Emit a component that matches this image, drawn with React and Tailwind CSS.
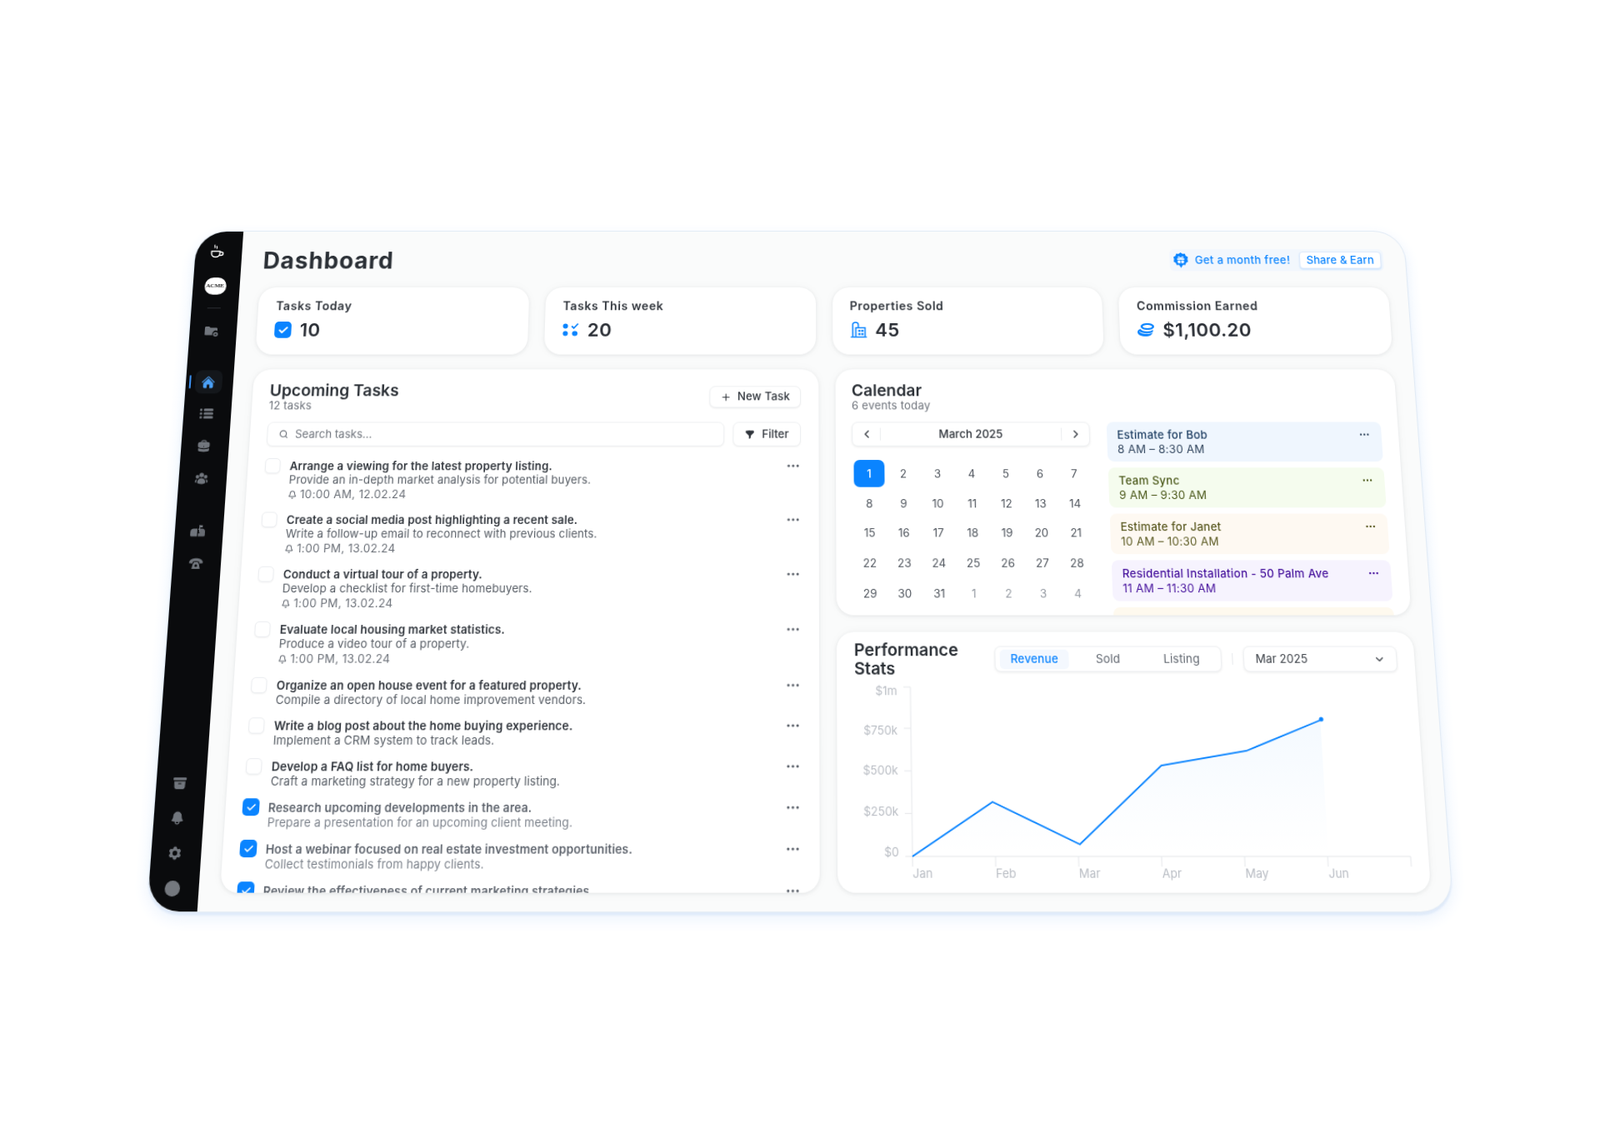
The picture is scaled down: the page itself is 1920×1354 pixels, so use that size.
import React from "react";
import { Plus, Search, ChevronLeft, ChevronRight, ChevronDown, Check, Ellipsis, Bell } from "lucide-react";
import { HiHome, HiBriefcase, HiUserGroup, HiArchiveBox, HiBell, HiCog6Tooth, HiFunnel } from "react-icons/hi2";

const tasks = [
  ["Arrange a viewing for the latest property listing.", "Provide an in-depth market analysis for potential buyers.", "10:00 AM, 12.02.24"],
  ["Create a social media post highlighting a recent sale.", "Write a follow-up email to reconnect with previous clients.", "1:00 PM, 13.02.24"],
  ["Conduct a virtual tour of a property.", "Develop a checklist for first-time homebuyers.", "1:00 PM, 13.02.24"],
  ["Evaluate local housing market statistics.", "Produce a video tour of a property.", "1:00 PM, 13.02.24"],
  ["Organize an open house event for a featured property.", "Compile a directory of local home improvement vendors."],
  ["Write a blog post about the home buying experience.", "Implement a CRM system to track leads."],
  ["Develop a FAQ list for home buyers.", "Craft a marketing strategy for a new property listing."],
  ["Research upcoming developments in the area.", "Prepare a presentation for an upcoming client meeting.", null, true],
  ["Host a webinar focused on real estate investment opportunities.", "Collect testimonials from happy clients.", null, true],
  ["Review the effectiveness of current marketing strategies.", null, null, true],
];

const events = [
  ["Estimate for Bob", "8 AM – 8:30 AM", "bg-[#eff6fe]", "text-[#1f3f63]", "text-[#33475f]"],
  ["Team Sync", "9 AM – 9:30 AM", "bg-[#f5fcee]", "text-[#4d5a1c]", "text-[#4d5a1c]"],
  ["Estimate for Janet", "10 AM – 10:30 AM", "bg-[#fef9f2]", "text-[#5b5a22]", "text-[#5b5a22]"],
  ["Residential Installation - 50 Palm Ave", "11 AM – 11:30 AM", "bg-[#f6f3fe]", "text-[#45119c]", "text-[#45119c]"],
  [null, null, "bg-[#fef9ee]", "", ""],
];

const days = [1,2,3,4,5,6,7,8,9,10,11,12,13,14,15,16,17,18,19,20,21,22,23,24,25,26,27,28,29,30,31,1,2,3,4];

function Nav({ children }) {
  return <div className="flex h-[38px] w-full shrink-0 items-center justify-center text-[#71767d]">{children}</div>;
}

function CoffeeIcon() {
  return (
    <svg width="17" height="17" viewBox="0 0 17 17" fill="none" stroke="#fff" strokeWidth="1.500" strokeLinecap="round">
      <path d="M1.500 8.500h10v2.500a4.500 4.500 0 0 1-4.500 4.500H6a4.500 4.500 0 0 1-4.500-4.500z" />
      <path d="M11.500 9.500h1.800a2 2 0 0 1 0 4h-2.300" />
      <path d="M5 1c-1 1 1 1.800 0 3M7.500 2.500c-.8.800.8 1.500 0 2.500" strokeWidth="1.200" />
    </svg>
  );
}

function ListIcon() {
  return (
    <svg width="16" height="14" viewBox="0 0 16 14" fill="currentColor">
      <rect x="0" y="1" width="3" height="3" rx="1.500" /><rect x="0" y="5.500" width="3" height="3" rx="1.500" /><rect x="0" y="10" width="3" height="3" rx="1.500" />
      <rect x="4.500" y="1" width="11.500" height="3" rx="1.500" /><rect x="4.500" y="5.500" width="11.500" height="3" rx="1.500" /><rect x="4.500" y="10" width="11.500" height="3" rx="1.500" />
    </svg>
  );
}

function FolderGear() {
  return (
    <svg width="17" height="15" viewBox="0 0 17 15" fill="currentColor">
      <path d="M0 2.500C0 1.500.7 1 1.500 1h3.600l1.400 1.600h7c.9 0 1.500.6 1.500 1.500v2.300a4 4 0 0 0-5.600 5.100H1.500C.6 11.500 0 11 0 10z" />
      <circle cx="13" cy="10.500" r="2.800" /><circle cx="13" cy="10.500" r="1" fill="#0a0b0d" />
    </svg>
  );
}

function Mailbox() {
  return (
    <svg width="17" height="15" viewBox="0 0 17 15" fill="currentColor">
      <path d="M4 4.500h4v9H1.500A1.500 1.500 0 0 1 0 12V8.500a4 4 0 0 1 4-4z" />
      <path d="M9 4.500h4.500A3.500 3.500 0 0 1 17 8v4a1.500 1.500 0 0 1-1.500 1.500H9V10h1.500V6H9z" fillOpacity=".9" />
      <rect x="10" y="0.500" width="1.200" height="8" /><rect x="10" y="0.500" width="4" height="2.500" />
    </svg>
  );
}

function PhoneIcon() {
  return (
    <svg width="16" height="14" viewBox="0 0 16 14" fill="currentColor">
      <path d="M0 5.200C1 2 4.500.8 8 .8s7 1.200 8 4.400l-.3 1.300-3.600.3-.7-2.300c-1-.4-2.100-.6-3.400-.6s-2.400.2-3.400.6l-.7 2.300-3.600-.3z" />
      <path d="M4.500 7c.8-.5 1.200-1.200 1.500-2h4c.3.800.7 1.500 1.500 2l1.300 6H3.200z" />
      <circle cx="8" cy="9.300" r="1.500" fill="#0a0b0d" />
    </svg>
  );
}

function GiftBadge() {
  return (
    <svg width="19" height="19" viewBox="0 0 20 20">
      <path fill="#0a84ff" d="M10 0l2.500 1.800 3-.3 1 2.900 2.600 1.500-.7 3 .7 3-2.600 1.500-1 2.900-3-.3L10 20l-2.500-3.900-3 .2-1-2.900L.9 11.900l.7-3-.7-3 2.600-1.500 1-2.900 3 .3z" />
      <path fill="#fff" d="M5.500 7.500h9v2h-9zM6 10.300h3.500V14H6.800a.8.8 0 0 1-.8-.8zM10.500 10.300H14v2.900a.8.8 0 0 1-.8.8h-2.700z" />
      <path fill="none" stroke="#fff" strokeWidth="1" d="M10 7.300C8.500 4.800 6.600 5 6.800 6.300c.1.800 1.500 1 3.200 1zM10 7.300c1.500-2.500 3.400-2.300 3.200-1-.1.800-1.500 1-3.200 1z" />
    </svg>
  );
}

function WeekIcon() {
  return (
    <svg width="20" height="18" viewBox="0 0 20 18" fill="#0a84ff">
      <rect x="0.500" y="1.500" width="6" height="6" rx="3" /><rect x="0.500" y="10.500" width="6" height="6" rx="3" /><rect x="11.500" y="10.500" width="6.500" height="6" rx="3" />
      <path d="M11 4.500l2.500 2.500L18.500 1.500" fill="none" stroke="#0a84ff" strokeWidth="1.800" />
    </svg>
  );
}

function BuildingIcon() {
  return (
    <svg width="20" height="20" viewBox="0 0 20 20" fill="none" stroke="#0a84ff" strokeWidth="1.600">
      <path d="M2.800 18.500V4a3 3 0 0 1 3-3h.7a3 3 0 0 1 3 3v3" />
      <path d="M6.500 18.500V7.500h11v11" />
      <path d="M0.500 18.700h19" />
      <g fill="#0a84ff" stroke="none">
        <rect x="9.500" y="10" width="2.500" height="2.500" /><rect x="13" y="10" width="2.500" height="2.500" /><rect x="9.500" y="14" width="2.500" height="2.500" /><rect x="13" y="14" width="2.500" height="2.500" />
      </g>
    </svg>
  );
}

function CoinsIcon() {
  return (
    <svg width="20" height="18" viewBox="0 0 20 18" fill="#0a84ff">
      <path d="M4 5C4 2.500 7.500 1 12 1s8 1.500 8 4-3.500 4-8 4-8-1.500-8-4zm2.500 0c0 1 2 2 5.500 2s5.500-1 5.500-2-2-2-5.500-2-5.500 1-5.500 2z" />
      <path d="M0 12c0-1.800 1.200-3.200 3.500-4 1.200 1.800 4.200 3 8 3 3 0 5.500-.7 7-2v2.200c-1.500 1.300-4.200 2-7.500 2-3.700 0-7-1-9-2.800 0 1.800 4 3.600 9 3.600 3 0 5.500-.6 7.200-1.800C16.500 15.900 13.500 17 10 17c-5.700 0-10-2-10-5z" />
    </svg>
  );
}

function Panel({ className, children }) {
  return <div className={"overflow-hidden rounded-[20px] bg-white shadow-[0_1px_4px_rgba(30,41,59,0.09),0_0_14px_rgba(30,41,59,0.03)] " + className}>{children}</div>;
}

function Stat({ label, icon, value }) {
  return (
    <Panel className="h-[82px] flex-1 pl-[21px] pt-[14px]">
      <div className="text-[14px] leading-[18px] font-semibold tracking-[0.04em] text-[#2f343b]">{label}</div>
      <div className="mt-[6px] flex h-[28px] items-center gap-[10px]">
        {icon}
        <span className="text-[22px] font-semibold tracking-[0.02em] text-[#2a2e35]">{value}</span>
      </div>
    </Panel>
  );
}

function Task({ t }) {
  const [title, desc, time, done] = t;
  return (
    <div className="flex items-start">
      {done ? (
        <div className="mt-[-2px] ml-[-1px] flex h-[19px] w-[19px] shrink-0 items-center justify-center rounded-[5px] bg-[#0a84ff] text-white"><Check size={12} strokeWidth={3} /></div>
      ) : (
        <div className="mt-[-1px] h-[18px] w-[18px] shrink-0 rounded-[5px] border border-[#eceef1] bg-white shadow-[0_1px_2px_rgba(0,0,0,0.05)]" />
      )}
      <div className={"flex-1 " + (done ? "ml-[10px]" : "ml-[11px]")}>
        <div className={"text-[13px] leading-[16px] font-semibold tracking-[0.012em] " + (done ? "font-medium text-[#5e646d]" : "text-[#2f343b]")}>{title}</div>
        {desc && <div className={"text-[13px] leading-[16px] tracking-[0.008em] " + (done ? "text-[#7d838c]" : "text-[#565c64]")}>{desc}</div>}
        {time && (
          <div className="mt-[1px] flex h-[17px] items-center gap-[4px] text-[13px] tracking-[0.025em] text-[#6b7078]">
            <Bell size={10} strokeWidth={2.500} />
            <span>{time}</span>
          </div>
        )}
      </div>
      <Ellipsis size={18} className="mt-[-1px] text-[#5f656e]" />
    </div>
  );
}

function Chart() {
  const ys = [[10, "$1m", 5], [56, "$750k", 3], [103, "$500k", 0], [149.6, "$250k", -2], [196, "$0", -4]];
  const xs = ["Jan", "Feb", "Mar", "Apr", "May", "Jun", ""];
  const pts = "84,196 175,137 272,183 367,97 464,81 550,47";
  return (
    <svg width="662" height="236" viewBox="0 0 662 236" className="block">
      <defs>
        <linearGradient id="fill" x1="0" y1="0" x2="0" y2="1">
          <stop offset="0" stopColor="#0a84ff" stopOpacity="0.045" />
          <stop offset="0.7" stopColor="#0a84ff" stopOpacity="0.012" />
          <stop offset="1" stopColor="#0a84ff" stopOpacity="0" />
        </linearGradient>
      </defs>
      <path d="M84 10V196H642" fill="none" stroke="#e6e8eb" strokeWidth="1" />
      {ys.map(([y, l, d]) => (
        <g key={l}>
          <line x1="76" x2="84" y1={y} y2={y} stroke="#e6e8eb" />
          <text x="69" y={y + 4 + d} textAnchor="end" fontSize="13" fill="#b9bdc4" fontFamily="Inter">{l}</text>
        </g>
      ))}
      {xs.map((l, i) => (
        <g key={i}>
          <line x1={84 + 93 * i} x2={84 + 93 * i} y1="196" y2="207" stroke="#e6e8eb" />
          {l && <text x={84 + 93 * i} y="219" fontSize="13" fill="#b9bdc4" fontFamily="Inter">{l}</text>}
        </g>
      ))}
      <polygon points={"84,196 " + pts + " 550,196"} fill="url(#fill)" />
      <polyline points={pts} fill="none" stroke="#0a84ff" strokeWidth="1.800" />
      <circle cx="551" cy="46" r="2.500" fill="#0a84ff" />
    </svg>
  );
}

export default function App() {
  return (
    <div className="h-[1354px] w-[1920px] overflow-hidden bg-white pt-[278px] pl-[233px] font-['Inter',sans-serif]">
      <div className="flex h-[783px] w-[1454px] origin-top-left [transform:matrix3d(0.99533,0,0,0,-0.07117,0.9625,0,-0.0000979,0,0,1,0,3.395,0,0,1)] [filter:blur(0.35px)] rounded-[36px] bg-[#fafbfb] shadow-[0_0_0_1px_#e2ebf5,0_3px_2px_1px_#e0ebfa,0_6px_16px_3px_#edf4fd]">
        <aside className="flex w-[56px] shrink-0 flex-col items-center rounded-l-[36px] bg-[#0a0b0d] pt-[5px] pr-[3px] pb-[6px]">
          <Nav><CoffeeIcon /></Nav>
          <div className="mt-[5px] flex h-[38px] w-full items-center justify-center">
            <div className="flex h-[21px] w-[26px] items-center justify-center rounded-full bg-white font-['Liberation_Serif',serif] text-[7px] font-bold text-[#222]">ACME</div>
          </div>
          <div className="mt-[8px] h-px w-[16px] bg-[#2b2e33]" />
          <div className="mt-[9px] w-full"><Nav><FolderGear /></Nav></div>
          <div className="relative mt-[23px] w-full">
            <div className="absolute top-[11px] left-[4px] h-[16px] w-[2px] rounded bg-[#3d93f5]" />
            <Nav>
              <div className="flex h-[28px] w-[32px] items-center justify-center rounded-[8px] bg-[#14171b]"><HiHome size={17} className="text-[#4a9ff5]" /></div>
            </Nav>
          </div>
          <Nav><ListIcon /></Nav>
          <Nav><HiBriefcase size={17} /></Nav>
          <Nav><HiUserGroup size={17} /></Nav>
          <div className="mt-[24px] w-full"><Nav><Mailbox /></Nav></div>
          <Nav><PhoneIcon /></Nav>
          <div className="mt-auto w-full">
            <Nav><HiArchiveBox size={17} /></Nav>
            <Nav><HiBell size={17} /></Nav>
            <Nav><HiCog6Tooth size={17} /></Nav>
            <Nav><div className="h-[17px] w-[17px] rounded-full bg-[#74787e]" /></Nav>
          </div>
        </aside>

        <main className="flex flex-1 flex-col pr-[24px] pl-[24px]">
          <header className="flex h-[69px] shrink-0 items-center justify-between pt-[2px] pl-[2px]">
            <h1 className="text-[28px] font-bold tracking-[0.03em] text-[#2b3036]">Dashboard</h1>
            <div className="mr-[3px] flex h-[27px] items-center gap-[11px] rounded-[6px] bg-[#f2f7fd] pr-[3px] pl-[4px]">
              <div className="flex items-center gap-[7px]">
                <GiftBadge />
                <span className="text-[13px] font-medium tracking-[0.03em] text-[#0a84ff]">Get a month free!</span>
              </div>
              <div className="flex h-[21px] w-[98px] items-center justify-center rounded-[4px] border border-[#dfeafa] bg-white text-[13px] font-medium tracking-[0.01em] text-[#0a84ff] shadow-[0_1px_2px_rgba(10,132,255,0.2)]">Share &amp; Earn</div>
            </div>
          </header>

          <div className="flex h-[82px] shrink-0 gap-[20px]">
            <Stat label="Tasks Today" value="10" icon={<div className="flex h-[20px] w-[20px] items-center justify-center rounded-[5px] bg-[#0a84ff] text-white"><Check size={13} strokeWidth={3.500} /></div>} />
            <Stat label="Tasks This week" value="20" icon={<WeekIcon />} />
            <Stat label="Properties Sold" value="45" icon={<BuildingIcon />} />
            <Stat label="Commission Earned" value="$1,100.20" icon={<CoinsIcon />} />
          </div>

          <div className="mt-[18px] flex h-[594px] shrink-0 gap-[20px]">
            <Panel className="h-full w-[669px] shrink-0 pt-[15px] pr-[21px] pl-[20px]">
              <div className="flex items-start justify-between">
                <div>
                  <div className="text-[19px] leading-[21px] font-semibold text-[#2b3036]">Upcoming Tasks</div>
                  <div className="text-[13px] leading-[15px] tracking-[0.01em] text-[#6f747c]">12 tasks</div>
                </div>
                <div className="mt-[5px] flex h-[26px] w-[108px] items-center justify-center gap-[7px] rounded-[7px] border border-[#eef0f2] bg-white text-[13px] font-medium tracking-[0.015em] text-[#2f343b] shadow-[0_1px_2px_rgba(0,0,0,0.07)]"><Plus size={13} />New Task</div>
              </div>
              <div className="mt-[12px] flex gap-[10px]">
                <div className="flex h-[29px] flex-1 items-center gap-[8px] rounded-[7px] border border-[#eef0f2] bg-white pl-[13px] text-[13px] text-[#6f747c] shadow-[0_1px_2px_rgba(0,0,0,0.05)]"><Search size={11} strokeWidth={2.500} />Search tasks...</div>
                <div className="flex h-[29px] w-[80px] items-center justify-center gap-[8px] rounded-[7px] border border-[#eef0f2] bg-white text-[13px] font-medium text-[#2f343b] shadow-[0_1px_2px_rgba(0,0,0,0.05)]"><HiFunnel size={12} />Filter</div>
              </div>
              <div className="mt-[15px] flex flex-col gap-[13px]">
                {tasks.map((t) => <Task key={t[0]} t={t} />)}
              </div>
            </Panel>

            <div className="flex flex-1 flex-col gap-[19px]">
              <Panel className="h-[288px] shrink-0 pt-[15px] pr-[20px] pl-[19px]">
                <div className="text-[19px] leading-[21px] font-semibold text-[#2b3036]">Calendar</div>
                <div className="text-[13px] leading-[15px] tracking-[0.015em] text-[#6f747c]">6 events today</div>
                <div className="mt-[12px] flex gap-[20px]">
                  <div className="w-[280px] shrink-0">
                    <div className="flex h-[29px] items-center rounded-[7px] border border-[#eef0f2] bg-white text-[13px] font-medium text-[#2f343b] shadow-[0_1px_3px_rgba(0,0,0,0.08)]">
                      <div className="flex w-[33px] justify-center border-r border-[#eceef0]"><ChevronLeft size={15} /></div>
                      <div className="flex-1 text-center">March 2025</div>
                      <div className="flex w-[33px] justify-center border-l border-[#eceef0]"><ChevronRight size={15} /></div>
                    </div>
                    <div className="mt-[15px] grid grid-cols-7 gap-y-0">
                      {days.map((d, i) => (
                        <div key={i} className="flex h-[34.900px] items-center justify-center">
                          <div className={"flex h-[32px] w-[36px] items-center justify-center rounded-[7px] text-[13px] " + (i === 0 ? "bg-[#0a84ff] font-medium text-white" : i > 30 ? "text-[#969ba3]" : "text-[#50565e]")}>{d}</div>
                        </div>
                      ))}
                    </div>
                  </div>
                  <div className="flex w-[323px] shrink-0 flex-col gap-[7px]">
                    {events.map(([a, b, bg, c1, c2], i) => (
                      <div key={i} className={"relative h-[47px] shrink-0 rounded-[8px] pt-[7px] pl-[12px] " + bg}>
                        {a && <div className={"text-[13px] leading-[17px] font-medium tracking-[0.02em] " + c1}>{a}</div>}
                        {b && <div className={"text-[13px] leading-[17px] tracking-[0.02em] " + c2}>{b}</div>}
                        {a && <Ellipsis size={14} className={"absolute top-[8px] right-[13px] " + c2} />}
                      </div>
                    ))}
                  </div>
                </div>
              </Panel>

              <Panel className="h-[287px] shrink-0 pt-[10px]">
                <div className="flex items-start px-[20px]">
                  <div className="flex-1 text-[19px] leading-[21px] font-semibold text-[#2b3036]">Performance<br />Stats</div>
                  <div className="mt-[6px] flex h-[29px] w-[260px] items-center gap-[5px] rounded-[7px] border border-[#eef0f2] bg-white px-[5px] text-[13px] tracking-[0.012em] shadow-[0_1px_3px_rgba(0,0,0,0.08)]">
                    <div className="flex h-[22px] w-[80px] items-center justify-center rounded-[5px] bg-[#f4f8fe] font-medium text-[#0a84ff]">Revenue</div>
                    <div className="flex h-[22px] w-[80px] items-center justify-center text-[#5f656e]">Sold</div>
                    <div className="flex h-[22px] w-[80px] items-center justify-center text-[#5f656e]">Listing</div>
                  </div>
                  <div className="mx-[12px] mt-[14px] h-[13px] w-px bg-[#e8eaed]" />
                  <div className="mt-[6px] flex h-[29px] w-[176px] items-center justify-between rounded-[7px] border border-[#eef0f2] bg-white pr-[12px] pl-[13px] text-[13px] text-[#3a3f46] shadow-[0_1px_3px_rgba(0,0,0,0.08)]">Mar 2025<ChevronDown size={14} /></div>
                </div>
                <Chart />
              </Panel>
            </div>
          </div>
        </main>
      </div>
    </div>
  );
}
